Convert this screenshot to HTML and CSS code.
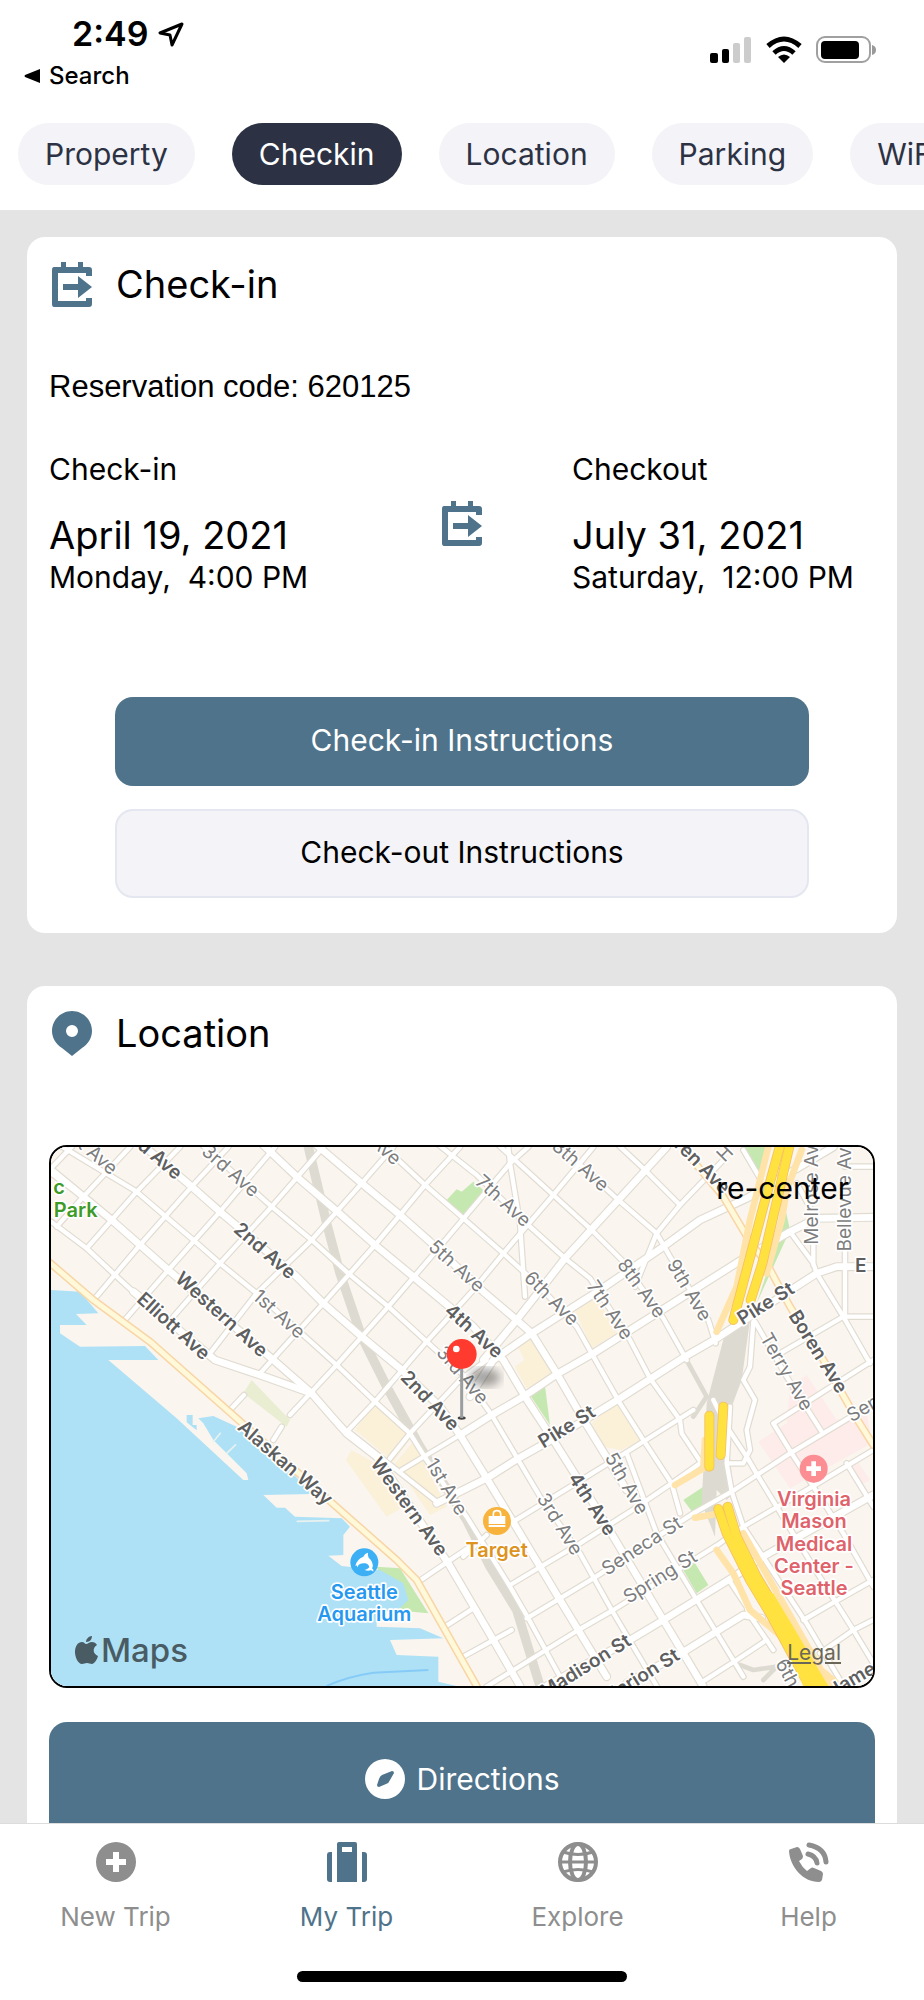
FILE: index.html
```html
<!DOCTYPE html>
<html lang="en">
<head>
    <meta charset="UTF-8">
    <meta name="viewport" content="width=device-width, initial-scale=1.0">
    <title>My Trip</title>
    <link rel="stylesheet" href="styles.css">
</head>
<body>
    <svg class="sprite" aria-hidden="true">
        <symbol id="icon-checkin" viewBox="0 0 40 45">
            <path d="M2 5h7V0h5v5h12V0h5v5h6q3 0 3 3v6h-6v-3H6v28h28v-3h6v6q0 3-3 3H2q-2 0-2-3V8q0-3 2-3z"/>
            <path d="M11 22h15v-8l14 11-14 11v-8H11z"/>
        </symbol>
        <symbol id="icon-pin" viewBox="0 0 40 45">
            <path fill-rule="evenodd" d="M20 0C9 0 0 9 0 20c0 7 4 13 10 17l10 8 10-8c6-4 10-10 10-17C40 9 31 0 20 0zm0 14a6 6 0 1 1 0 12 6 6 0 0 1 0-12z"/>
        </symbol>
    </svg>

    <header class="header">
        <div class="status-bar">
            <div class="status-left">
                <div class="time">
                    <span>2:49</span>
                    <svg width="26" height="25" viewBox="0 0 26 25"><path d="M24 2 2 11l10 2 2 10z" fill="none" stroke="#000" stroke-width="3" stroke-linejoin="round"/></svg>
                </div>
                <a href="#" class="back">
                    <svg width="16" height="16" viewBox="0 0 16 16"><path d="M16 1v14L1 9q-1-1 0-2z"/></svg>
                    Search
                </a>
            </div>
            <svg class="status-icons" width="166" height="28" viewBox="0 0 166 28">
                <rect x="0" y="17" width="8" height="10" rx="2"/>
                <rect x="12" y="13" width="7" height="14" rx="2"/>
                <rect x="23" y="7" width="7" height="20" rx="2" fill="#ccc"/>
                <rect x="34" y="1" width="7" height="26" rx="2" fill="#ccc"/>
                <path d="M58 10q16-14 32 0M64 17q10-9 20 0" fill="none" stroke="#000" stroke-width="5"/>
                <path d="M68 21q6-5 12 0l-6 6z"/>
                <rect x="107" y="1" width="53" height="25" rx="8" fill="none" stroke="#a0a0a0" stroke-width="2"/>
                <rect x="111" y="5" width="38" height="18" rx="4"/>
                <path d="M162 9q4 1 4 5t-4 5z" fill="#999"/>
            </svg>
        </div>
        <nav class="pills">
            <button class="pill">Property</button>
            <button class="pill active">Checkin</button>
            <button class="pill">Location</button>
            <button class="pill">Parking</button>
            <button class="pill">WiFi</button>
        </nav>
    </header>

    <main class="content">
        <section class="card">
            <div class="card-title">
                <svg class="card-icon"><use href="#icon-checkin"/></svg>
                <h2>Check-in</h2>
            </div>
            <p class="code">Reservation code: 620125</p>
            <div class="dates">
                <div>
                    <p>Check-in</p>
                    <p class="date">April 19, 2021</p>
                    <p class="hour">Monday,&nbsp; 4:00 PM</p>
                </div>
                <svg class="card-icon"><use href="#icon-checkin"/></svg>
                <div>
                    <p>Checkout</p>
                    <p class="date">July 31, 2021</p>
                    <p class="hour">Saturday,&nbsp; 12:00 PM</p>
                </div>
            </div>
            <div class="actions">
                <button class="btn btn-primary">Check-in Instructions</button>
                <button class="btn btn-light">Check-out Instructions</button>
            </div>
        </section>

        <section class="card">
            <div class="card-title">
                <svg class="card-icon"><use href="#icon-pin"/></svg>
                <h2>Location</h2>
            </div>
            <div class="map">
                <svg class="map-canvas" viewBox="33 51 2466 1617" preserveAspectRatio="xMidYMid slice">
                    <defs>
                        <filter id="blur"><feGaussianBlur stdDeviation="14"/></filter>
                        <g id="minor">
                            <!-- avenues -->
                            <path d="M33 30 290 185 375 258 460 330 540 400 650 490 790 615 890 705 1005 815 1110 910 1160 990 1280 1160 1410 1370 1465 1465 1575 1668"/>
                            <path d="M33 275 140 355 225 435 285 490"/>
                            <path d="M470 30 650 190 695 230 815 330 925 430 1045 530 1160 635 1270 735 1355 855 1435 990 1500 1100 1620 1270 1715 1440 1850 1668"/>
                            <path d="M1000 20 1155 165 1270 265 1390 370 1500 470 1610 590 1655 670 1740 820 1810 930 1895 1060 1920 1150"/>
                            <path d="M1190 40 1310 135 1470 290 1575 385 1650 445 1770 630 1830 745 1920 870 1925 910 1985 1000"/>
                            <path d="M1370 40 1540 195 1655 300 1745 390 1870 565 1940 690"/>
                            <path d="M1550 40 1735 210 1850 310 1890 380 2005 570 2027 640"/>
                            <path d="M1735 45 1815 120 1920 225"/>
                            <path d="M1405 51 1410 100 1440 280 1455 500"/>
                            <path d="M1760 970 1850 1210 1970 1410 2110 1640"/>
                            <path d="M2070 1355 2120 1430 2125 1450 2200 1560"/>
                            <!-- cross streets, west side -->
                            <path d="M33 115 95 51M50 290 130 200 270 51M33 130 130 200"/>
                            <path d="M140 355 215 270 290 185 420 51M165 505 300 345 455 170 565 51"/>
                            <path d="M250 575 385 420 540 245 705 51M400 560 540 400 695 230 850 51"/>
                            <path d="M510 670 650 490 815 330 965 160 1060 51M660 730 850 520 1005 345 1155 165 1260 51"/>
                            <path d="M750 855 890 705 1045 530 1195 355 1410 100 1465 51"/>
                            <path d="M920 905 1005 815 1160 635 1300 480 1390 370 1540 195 1660 51"/>
                            <path d="M1050 985 1110 910 1260 750 1340 690M570 840 612 795M700 930 725 890"/>
                            <path d="M1085 1020 1260 915 1355 855"/>
                            <path d="M925 905 1190 1115 1340 1045"/>
                            <!-- cross streets, downtown -->
                            <path d="M1270 1280 1340 1215M1420 1175 1640 1040 1770 960 1960 840"/>
                            <path d="M1410 1365 1620 1240 1770 1145 1895 1060 1980 1000"/>
                            <path d="M1460 1465 1660 1345 1960 1150 2075 1085 2250 970 2500 820"/>
                            <path d="M1340 1670 1615 1500 1720 1440 2040 1240 2110 1190 2300 1080 2500 960"/>
                            <path d="M1135 1355 1290 1250M1215 1490 1300 1435M1270 1580 1415 1500"/>
                            <path d="M1980 1660 2090 1590 2180 1530M2290 1470 2385 1415 2500 1350M2340 1570 2440 1500 2500 1470"/>
                            <path d="M1785 470 1850 310 1920 225 2050 90"/>
                            <!-- first hill -->
                            <path d="M2110 60 2160 145M2140 575 2130 710 2110 750 2145 810 2120 900 2130 960 2110 1000 2065 1000"/>
                            <path d="M2145 575 2240 740 2345 905M2020 810 2060 890 2120 980 2155 1040 2320 1310 2440 1500 2530 1650"/>
                            <path d="M2070 830 2060 1000 2075 1085 2110 1190 2300 1480 2400 1650"/>
                            <path d="M2200 880 2255 970 2320 1070 2410 1210 2500 1370M2420 1000 2500 1130M2200 880 2500 690"/>
                            <path d="M2250 305 2320 400 2330 430 2410 560 2490 700M2320 330V405M2415 340V560H2500M2220 670 2410 560M2270 160 2320 250M2415 110H2500"/>
                        </g>
                        <g id="major">
                            <path d="M525 690 660 735 815 790M280 485 525 690"/>
                            <path d="M33 120 215 270 300 345 385 420 700 690 815 790 880 865 920 910 1010 980 1225 1300 1360 1530 1440 1668"/>
                            <path d="M290 30 455 170 540 245 770 440 850 520 965 620 1080 715 1200 830 1260 915 1340 1045 1425 1185 1560 1410 1700 1640"/>
                            <path d="M670 45 770 140 890 243 1005 345 1120 440 1300 590 1390 690 1455 800 1540 930 1660 1120 1870 1470 1990 1670"/>
                            <path d="M830 45 965 160 1080 255 1170 335 1330 485 1430 570 1475 610 1550 730 1625 860 1760 1080"/>
                            <path d="M1330 690 1430 570 1575 385 1735 210 1880 51"/>
                            <path d="M1290 800 1360 690 1475 610 1680 480 1870 350 1980 270 2120 205 2280 110 2380 51"/>
                            <path d="M1260 915 1355 855 1450 800 1555 730 1660 670 1850 550 2120 380 2250 305 2330 265 2500 262"/>
                            <path d="M1190 1120 1340 1045 1435 985 1560 915 1740 805 1935 680 2030 625 2330 430 2390 410 2500 410"/>
                            <path d="M1520 1668 1770 1530 1870 1470 2090 1335 2160 1285 2500 1095"/>
                            <path d="M1760 1660 1940 1560 2110 1455 2165 1465"/>
                        </g>
                    </defs>

                    <rect x="33" y="51" width="2466" height="1617" fill="#faf5ef"/>

                    <!-- blocks -->
                    <g fill="#fbf0d8">
                        <path d="M1605 540 1670 500 1730 610 1655 655zM1430 640 1470 615 1540 735 1460 775 1425 710 1453 690z"/>
                        <path d="M1005 820 1120 915 1060 995 945 900zM935 960 918 990 1040 1160 1110 1120 1060 1030zM1065 1000 1120 935 1220 1130 1170 1155z"/>
                        <path d="M1655 880 1735 815 1810 925 1745 960 1690 950z"/>
                    </g>
                    <g fill="#fdecea">
                        <path d="M2250 770 2300 735 2390 870 2480 850 2495 940 2250 1075 2155 935 2240 880zM2420 1010 2450 990 2490 1050 2460 1065z"/>
                    </g>
                    <g fill="#c5e8b0">
                        <path d="M1220 210 1250 178 1265 185 1300 155 1330 180 1320 205 1270 257zM1470 795 1515 768 1530 885z"/>
                        <path d="M2105 51H2190L2160 150zM2230 210 2250 300 2150 520 2190 400zM1930 1110 1990 1070 2000 1120 1960 1150zM1930 1320 1965 1300 2005 1365 1970 1390z"/>
                        <path d="M1010 1310 1080 1315 1165 1450 1060 1440z"/>
                    </g>
                    <path fill="#e9edd2" d="M610 790 635 750 750 870 740 890z"/>

                    <!-- rail -->
                    <path class="rail" d="M805 51 860 280 900 430 965 620 1040 770 1140 950 1280 1170 1350 1310 1430 1440 1500 1668"/>
                    <path fill="#dddbd1" d="M2060 590 2130 570 2105 750 2060 870 2080 1090 2060 1110 2030 1080 2025 1220 1985 1120 2000 820z"/>
                    <path class="rail thin" d="M1945 700 2000 800 1960 860M2100 1605 2140 1620 2210 1610 2170 1650"/>

                    <!-- water -->
                    <path fill="#aee1f6" d="M33 480 120 485 175 550 108 552 140 585H60V610L120 650 315 648 355 690H205L410 865 610 1050 625 1050 620 1030 520 930 490 880 475 865 520 858 590 890 740 1010 815 1092 670 1095 710 1133 735 1133 765 1160 905 1165 930 1190 910 1215V1275L865 1277 905 1308 1020 1320 1090 1360 1105 1410 1080 1435 1010 1450 1010 1490 1140 1495 1210 1525 1050 1530 1070 1575 1195 1580V1655L1250 1668H33z"/>
                    <path d="M520 935 542 908M560 970 588 943M770 1174 868 1172" fill="none" stroke="#e8f1f0" stroke-width="5"/>
                    <path d="M440 855h18v30h12v16l-30-24z" fill="#aee1f6"/>
                    <path d="M860 1668Q920 1640 1000 1628L1165 1620" fill="none" stroke="#86cbf7" stroke-width="6"/>

                    <use href="#minor" class="casing"/>
                    <use href="#major" class="casing wide"/>
                    <use href="#minor" class="road"/>
                    <use href="#major" class="road wide"/>

                    <!-- shoreline road and Boren Ave -->
                    <g class="scenic">
                        <path id="shore" d="M20 390 160 510 330 635 590 865 900 1140 1070 1290 1130 1350 1310 1668"/>
                        <path id="boren" d="M1940 70 2050 200 2130 335 2180 400 2250 530 2350 690 2440 850 2500 945"/>
                    </g>
                    <g class="scenic-fill"><use href="#shore"/><use href="#boren"/></g>

                    <!-- freeway -->
                    <g class="ramp">
                        <path d="M2185 51 2130 270 2090 470 2030 605M2285 60 2240 180 2225 270 2180 430"/>
                        <path d="M1905 1065 1990 1015 1995 930M1965 1163 2040 1150M2030 1260 2080 1330 2130 1440 2400 1668M2110 1210 2370 1668"/>
                    </g>
                    <g class="freeway edge">
                        <path id="fw1" d="M2222 40 2170 230 2120 420 2080 570"/>
                        <path id="fw2" d="M2250 40 2202 250 2167 400 2132 510"/>
                        <path id="fw3" d="M2008 857V1010M2050 830 2042 975"/>
                        <path id="fw4" d="M2035 1137 2060 1210 2130 1350 2190 1450 2320 1690M2063 1130 2090 1220 2150 1340 2210 1440 2350 1690"/>
                    </g>
                    <g class="freeway"><use href="#fw1"/><use href="#fw2"/><use href="#fw3"/><use href="#fw4"/></g>
                    <path fill="#ffe140" d="M2165 1380 2200 1390 2365 1668H2290z"/>

                    <g class="street">
                        <text transform="translate(154 61) rotate(41)">1st Ave</text>
                        <text transform="translate(572 122) rotate(41)">3rd Ave</text>
                        <text transform="translate(717 552) rotate(42)">1st Ave</text>
                        <text transform="translate(1000 26) rotate(42)">5th Ave</text>
                        <text transform="translate(1390 212) rotate(42)">7th Ave</text>
                        <text transform="translate(1250 408) rotate(42)">5th Ave</text>
                        <text transform="translate(1535 505) rotate(45)">6th Ave</text>
                        <text transform="translate(1710 540) rotate(56)">7th Ave</text>
                        <text transform="translate(1805 475) rotate(54)">8th Ave</text>
                        <text transform="translate(1948 480) rotate(59)">9th Ave</text>
                        <text transform="translate(1622 106) rotate(41)">8th Ave</text>
                        <text transform="translate(1268 735) rotate(50)">3rd Ave</text>
                        <text transform="translate(1220 1070) rotate(59)">1st Ave</text>
                        <text transform="translate(1560 1182) rotate(58)">3rd Ave</text>
                        <text transform="translate(1760 1060) rotate(60)">5th Ave</text>
                        <text transform="translate(1805 1247) rotate(-33)">Seneca St</text>
                        <text transform="translate(1860 1340) rotate(-32)">Spring St</text>
                        <text transform="translate(2240 725) rotate(60)">Terry Ave</text>
                        <text transform="translate(2315 178) rotate(-90)">Melrose Ave</text>
                        <text transform="translate(2412 192) rotate(-90)">Bellevue Ave</text>
                        <text transform="translate(2055 70) rotate(-45)">H</text>
                        <text transform="translate(2512 810) rotate(-30)">Seneca</text>
                        <text transform="translate(2270 1680) rotate(62)">6th Ave</text>
                    </g>
                    <g class="street strong">
                        <text transform="translate(334 64) rotate(41)">2nd Ave</text>
                        <text transform="translate(675 362) rotate(41)">2nd Ave</text>
                        <text transform="translate(545 553) rotate(42)">Western Ave</text>
                        <text transform="translate(401 588) rotate(42)">Elliott Ave</text>
                        <text transform="translate(736 998) rotate(41)">Alaskan Way</text>
                        <text transform="translate(1302 603) rotate(42)">4th Ave</text>
                        <text transform="translate(1170 812) rotate(46)">2nd Ave</text>
                        <text transform="translate(1108 1130) rotate(54)">Western Ave</text>
                        <text transform="translate(1657 1122) rotate(57)">4th Ave</text>
                        <text transform="translate(1580 890) rotate(-32)">Pike St</text>
                        <text transform="translate(1636 1608) rotate(-32)">Madison St</text>
                        <text transform="translate(1800 1640) rotate(-32)">Marion St</text>
                        <text transform="translate(2177 520) rotate(-32)">Pike St</text>
                        <text transform="translate(1962 82) rotate(45)">Boren Ave</text>
                        <text transform="translate(2335 665) rotate(58)">Boren Ave</text>
                        <text x="2462" y="405">E</text>
                        <text transform="translate(2450 1640) rotate(-30)">James</text>
                    </g>

                    <!-- places -->
                    <g class="place" fill="#3d9b27">
                        <text x="57" y="192">c</text>
                        <text x="107" y="262">Park</text>
                    </g>
                    <g class="place" fill="#dd9320">
                        <text x="1370" y="1281">Target</text>
                    </g>
                    <g class="place" fill="#2698f0">
                        <text x="973" y="1407">Seattle</text>
                        <text x="973" y="1474">Aquarium</text>
                    </g>
                    <g class="place" fill="#df636b">
                        <text x="2322" y="1128">Virginia</text>
                        <text x="2322" y="1195">Mason</text>
                        <text x="2322" y="1262">Medical</text>
                        <text x="2322" y="1329">Center -</text>
                        <text x="2322" y="1396">Seattle</text>
                    </g>
                    <circle cx="1371" cy="1173" r="42" fill="#f7b33c"/>
                    <path fill="#fff" d="M1346 1158h50v24h-50zM1346 1185h50v6h-50z"/>
                    <path d="M1360 1158v-6q0-10 11-10t11 10v6" fill="none" stroke="#fff" stroke-width="5"/>
                    <circle cx="973" cy="1297" r="42" fill="#3db0f5"/>
                    <path fill="#fff" d="M946 1308q4-20 24-28 4-10 14-12-2 8 2 15 14 12 12 28l-2 4q6 4 4 10-6-6-14-3-8 0-12-2 8-2 14-8-2-10-12-12-14-2-20 4l-4 8-2-6z"/>
                    <circle cx="2321" cy="1016" r="42" fill="#fb8d93"/>
                    <path fill="#fff" d="M2314 994h14v15h15v14h-15v15h-14v-15h-15v-14h15z"/>

                    <!-- dropped pin -->
                    <ellipse cx="1335" cy="742" rx="46" ry="28" fill="#000" opacity=".35" filter="url(#blur)"/>
                    <ellipse cx="1265" cy="864" rx="12" ry="5" fill="#444"/>
                    <path d="M1265 700V864" stroke="#9b9ea1" stroke-width="9"/>
                    <circle cx="1265" cy="672" r="45" fill="#ff3b30"/>
                    <circle cx="1249" cy="657" r="10" fill="#fff"/>
                </svg>
                <button class="recenter">re-center</button>
                <div class="map-brand">
                    <svg width="23" height="28" viewBox="0 0 23 28"><path d="M11 8c2 0 3-2 6-2 2 0 4 1 5 3-5 3-4 9 1 11-1 4-4 8-6 8s-3-1-5-1-3 1-5 1C3 28 0 21 0 16c0-6 3-10 7-10 2 0 3 2 4 2zM11 6c0-3 3-6 6-6 0 3-2 6-6 6z"/></svg>
                    <span>Maps</span>
                </div>
                <a href="#" class="map-legal">Legal</a>
            </div>
            <button class="btn btn-primary btn-wide">
                <svg width="40" height="40" viewBox="0 0 40 40"><path fill="#fff" fill-rule="evenodd" d="M20 0a20 20 0 1 1 0 40 20 20 0 0 1 0-40zM17 16q-2 1-3 4l-2 6q0 2 2 2l7-3q3-1 4-4l4-7q0-2-2-2z"/></svg>
                Directions
            </button>
        </section>
    </main>

    <footer class="footer">
        <nav class="tabs">
            <a href="#" class="tab">
                <svg viewBox="0 0 40 40"><path fill-rule="evenodd" d="M20 0a20 20 0 1 1 0 40 20 20 0 0 1 0-40zm-3 10v7h-7v6h7v7h6v-7h7v-6h-7v-7z"/></svg>
                New Trip
            </a>
            <a href="#" class="tab active">
                <svg viewBox="0 0 40 40"><path fill-rule="evenodd" d="M12 0h16q2 0 2 2v38H10V2q0-2 2-2zm3 5v5h10V5z"/><path d="M5 10v30H3q-3 0-3-3V13q0-3 3-3zM35 10v30h2q3 0 3-3V13q0-3-3-3z"/></svg>
                My Trip
            </a>
            <a href="#" class="tab">
                <svg viewBox="0 0 40 40"><g fill="none" stroke="currentColor" stroke-width="4"><circle cx="20" cy="20" r="18"/><ellipse cx="20" cy="20" rx="8" ry="18"/><path d="M2 20h36M5 10q15 5 30 0M5 30q15-5 30 0" stroke-width="3"/></g></svg>
                Explore
            </a>
            <a href="#" class="tab">
                <svg viewBox="0 0 40 40"><path d="M2 7l6-2q2 0 3 2l3 7q0 2-1 3l-3 2q3 6 8 10l4-3q1-1 3 0l7 3q2 1 2 3l-1 6q-1 2-3 2C14 40 1 25 0 9q0-2 2-2z"/><g fill="none" stroke="currentColor" stroke-width="5" stroke-linecap="round"><path d="M20 3q16 3 17 17M19 12q8 2 9 9"/></g></svg>
                Help
            </a>
        </nav>
        <div class="home-bar"></div>
    </footer>
</body>
</html>
```
FILE: styles.css
```css
* {
    box-sizing: border-box;
}

body {
    margin: 0;
    height: 100vh;
    display: flex;
    flex-direction: column;
    overflow: hidden;
    background: #e4e4e4;
    color: #000;
    font-family: Inter, "Liberation Sans", sans-serif;
    font-size: 30px;
    line-height: 36px;
}

h2, p {
    margin: 0;
    font-weight: 400;
}

button {
    font: inherit;
    border: none;
    cursor: pointer;
}

a {
    color: inherit;
    text-decoration: none;
}

.sprite {
    position: absolute;
    width: 0;
    height: 0;
}

.header {
    background: #fff;
    flex: none;
}

/* status bar */
.status-bar {
    display: flex;
    justify-content: space-between;
    align-items: flex-start;
    height: 98px;
    padding: 14px 48px 0 24px;
}

.time {
    display: flex;
    align-items: center;
    gap: 10px;
    padding-left: 48px;
    font-size: 34px;
    font-weight: 600;
    line-height: 40px;
}

.back {
    display: flex;
    align-items: center;
    gap: 9px;
    font-size: 24px;
    font-weight: 500;
    line-height: 44px;
}

.status-icons {
    margin-top: 22px;
}

/* section pills */
.pills {
    display: flex;
    gap: 37px;
    padding: 25px 18px;
    overflow: hidden;
}

.pill {
    flex: none;
    height: 62px;
    padding: 0 27px;
    border-radius: 31px;
    background: #f3f3f8;
    color: #2c3243;
}

.pill.active {
    background: #2c3243;
    color: #fff;
}

/* cards */
.content {
    flex: 1;
    min-height: 0;
    overflow: hidden;
    padding: 27px;
}

.card {
    background: #fff;
    border-radius: 18px;
    padding: 24px 22px 35px;
    margin-bottom: 53px;
}

.card-title {
    display: flex;
    align-items: center;
    gap: 24px;
    padding-left: 3px;
}

.card-title h2 {
    font-size: 38px;
    line-height: 46px;
}

.card-icon {
    width: 40px;
    height: 45px;
    fill: #4f738a;
}

.code {
    margin-top: 62px;
    font-family: "Liberation Sans", sans-serif;
    font-size: 31px;
}

.dates {
    display: grid;
    grid-template-columns: 1fr 40px 1fr;
    align-items: center;
    margin-top: 46px;
}

.dates div:last-child {
    padding-left: 90px;
}

.dates .date {
    margin-top: 24px;
    font-size: 38px;
    line-height: 48px;
}

.hour {
    white-space: nowrap;
}

.actions {
    display: flex;
    flex-direction: column;
    gap: 23px;
    margin-top: 102px;
    padding: 0 66px;
}

.btn {
    display: flex;
    align-items: center;
    justify-content: center;
    gap: 12px;
    width: 100%;
    height: 89px;
    padding: 0 6px 4px;
    border-radius: 18px;
}

.btn-primary {
    background: #4f738a;
    color: #fff;
}

.btn-light {
    background: #f3f3f8;
    border: 2px solid #e4e7ef;
    color: #000;
}

.btn-wide {
    height: 124px;
    margin-top: 34px;
    padding-bottom: 10px;
}

/* map */
.map {
    position: relative;
    margin-top: 89px;
    border: 2px solid #000;
    border-radius: 18px;
    overflow: hidden;
}

.map-canvas {
    display: block;
    width: 100%;
}

.casing,
.road,
.ramp,
.freeway,
.scenic,
.scenic-fill,
.rail {
    fill: none;
    stroke-linecap: round;
    stroke-linejoin: round;
}

.casing {
    stroke: #e1dcd1;
    stroke-width: 20px;
}

.casing.wide {
    stroke-width: 27px;
}

.road {
    stroke: #fff;
    stroke-width: 13px;
}

.road.wide {
    stroke-width: 20px;
}

.rail {
    stroke: #dddbd1;
    stroke-width: 28px;
}

.rail.thin {
    stroke-width: 14px;
}

.scenic {
    stroke: #f8d5a6;
    stroke-width: 24px;
}

.scenic-fill {
    stroke: #fff8d9;
    stroke-width: 15px;
}

.ramp {
    stroke: #ffe3a8;
    stroke-width: 20px;
}

.freeway {
    stroke: #ffe140;
    stroke-width: 25px;
}

.freeway.edge {
    stroke: #f6c063;
    stroke-width: 30px;
}

.street text {
    font-size: 57px;
    text-anchor: middle;
    dominant-baseline: central;
    fill: #7d7d7d;
    stroke: #fff;
    stroke-width: 10px;
    stroke-linejoin: round;
    paint-order: stroke;
}

.street.strong text {
    font-weight: 600;
    fill: #5e5e5e;
}

.place text {
    font-size: 60px;
    font-weight: 600;
    text-anchor: middle;
    stroke: #fff;
    stroke-width: 10px;
    stroke-linejoin: round;
    paint-order: stroke;
}

.recenter {
    position: absolute;
    top: 23px;
    right: 24px;
    padding: 0;
    background: none;
    color: #000;
}

.map-brand {
    position: absolute;
    left: 24px;
    bottom: 16px;
    display: flex;
    align-items: center;
    gap: 3px;
    font-size: 33px;
    font-weight: 500;
    line-height: 40px;
    color: #4a5c63;
    fill: #4a5c63;
}

.map-legal {
    position: absolute;
    right: 32px;
    bottom: 20px;
    font-size: 21px;
    line-height: 26px;
    color: #6b6758;
    text-decoration: underline;
}

/* bottom tabs */
.footer {
    flex: none;
    background: #fff;
    border-top: 1px solid #dcdcdc;
    padding: 18px 0;
}

.tabs {
    display: grid;
    grid-template-columns: repeat(4, 1fr);
}

.tab {
    display: flex;
    flex-direction: column;
    align-items: center;
    gap: 19px;
    font-size: 26px;
    line-height: 32px;
    color: #8e8e8e;
    fill: #8e8e8e;
}

.tab svg {
    width: 40px;
    height: 40px;
}

.tab.active {
    color: #4f738a;
    fill: #4f738a;
}

.home-bar {
    width: 330px;
    height: 11px;
    margin: 38px auto 0;
    border-radius: 6px;
    background: #000;
}
```
